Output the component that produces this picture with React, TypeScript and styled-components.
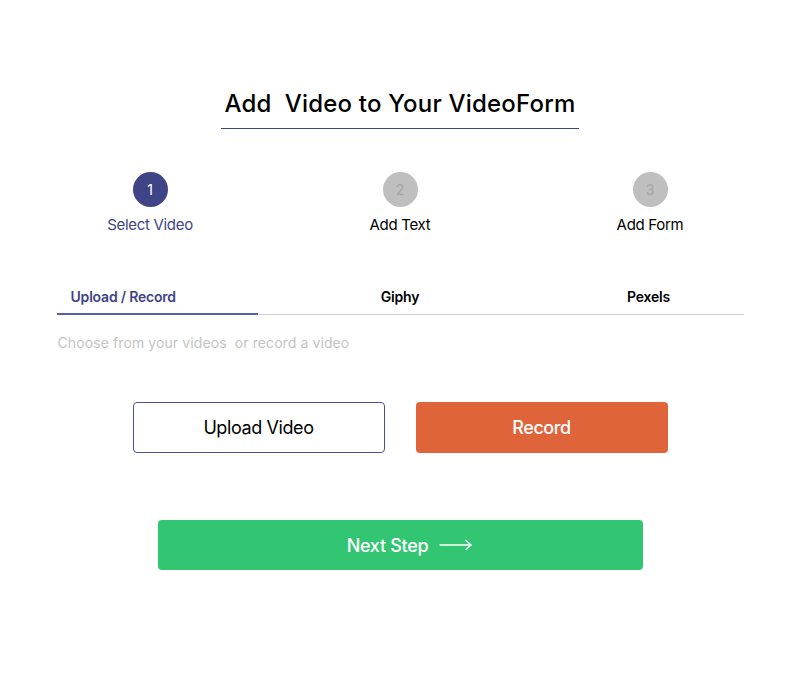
import React, { useState } from 'react';
import styled, { createGlobalStyle } from 'styled-components';

const INDIGO = '#3f4486';
const FONT = `Inter, "Noto Sans", "Liberation Sans", sans-serif`;

const GlobalStyle = createGlobalStyle`
    html, body {
        margin: 0;
        padding: 0;
        background: #ffffff;
        font-family: ${FONT};
    }
`;

const steps = ['Select Video', 'Add Text', 'Add Form'];
const tabs = ['Upload / Record', 'Giphy', 'Pexels'];

export default function App() {

    const [activeTab, setActiveTab] = useState<number>(0);

    return (<Page>
        <GlobalStyle />

        {/* Heading */}
        <TitleRow>
            <Title>Add&nbsp; Video to Your VideoForm</Title>
        </TitleRow>

        {/* Progress */}
        <Steps>
            {steps.map((label, i) => <Step key={label}>
                <StepCircle active={i === 0}>{i + 1}</StepCircle>
                <StepLabel active={i === 0}>{label}</StepLabel>
            </Step>)}
        </Steps>

        {/* Source tabs */}
        <Tabs>
            {tabs.map((label, i) => <Tab key={label} index={i} active={activeTab === i} onClick={() => setActiveTab(i)}>
                {label}
            </Tab>)}
        </Tabs>
        <Hint>Choose from your videos&nbsp; or record a video</Hint>

        <ButtonRow>
            <OutlineButton>Upload Video</OutlineButton>
            <RecordButton>Record</RecordButton>
        </ButtonRow>

        <NextRow>
            <NextButton>
                Next Step
                <svg width="34" height="12" viewBox="0 0 34 12" fill="none" stroke="#ffffff" strokeWidth="1.3" strokeLinecap="round" strokeLinejoin="round">
                    <path d="M1 6h31" />
                    <path d="M27 1.5l5 4.5-5 4.5" />
                </svg>
            </NextButton>
        </NextRow>
    </Page>);
}

const Page = styled.div`
    width: 800px;
    height: 693px;
    display: flex;
    flex-direction: column;
    align-items: center;
    box-sizing: border-box;
    padding-top: 89px;
`;

const TitleRow = styled.div`
    border-bottom: 1px solid ${INDIGO};
    padding: 0 3px 10px;
`;

const Title = styled.h1`
    margin: 0;
    font-size: 24px;
    line-height: 29px;
    font-weight: 500;
    color: #000000;
    letter-spacing: 0.2px;
`;

const Steps = styled.div`
    margin-top: 43px;
    width: 750px;
    display: grid;
    grid-template-columns: repeat(3, 1fr);
`;

const Step = styled.div`
    display: flex;
    flex-direction: column;
    align-items: center;
    gap: 9px;
`;

const StepCircle = styled.div<{ active: boolean }>`
    width: 35px;
    height: 35px;
    border-radius: 50%;
    display: flex;
    align-items: center;
    justify-content: center;
    font-size: 14px;
    background: ${props => props.active ? INDIGO : '#bfbfbf'};
    color: ${props => props.active ? '#ffffff' : '#a6a6a6'};
`;

const StepLabel = styled.div<{ active: boolean }>`
    font-size: 15px;
    line-height: 18px;
    letter-spacing: -0.3px;
    color: ${props => props.active ? INDIGO : '#000000'};
`;

const Tabs = styled.div`
    margin-top: 48px;
    width: 687px;
    display: grid;
    grid-template-columns: 201px 1fr 201px;
    border-bottom: 1px solid #d0d0d0;
`;

const Tab = styled.div<{ active: boolean, index: number }>`
    font-size: 14px;
    line-height: 17px;
    font-weight: 600;
    letter-spacing: -0.2px;
    padding: 6px 0 8px;
    margin-bottom: -1px;
    cursor: pointer;
    text-align: ${props => props.index === 0 ? 'left' : 'center'};
    padding-left: ${props => props.index === 0 ? '14px' : props.index === 2 ? '11px' : '0'};
    color: ${props => props.active ? INDIGO : '#000000'};
    border-bottom: 2px solid ${props => props.active ? '#5a5fa8' : 'transparent'};
`;

const Hint = styled.div`
    width: 687px;
    padding-left: 1px;
    box-sizing: border-box;
    margin-top: 19px;
    font-size: 14px;
    line-height: 17px;
    letter-spacing: 0.1px;
    color: #c4c4c4;
`;

const ButtonRow = styled.div`
    margin-top: 51px;
    display: flex;
    gap: 31px;
`;

const OutlineButton = styled.button`
    width: 252px;
    height: 51px;
    border: 1px solid #4a4f96;
    border-radius: 4px;
    background: #ffffff;
    font-family: ${FONT};
    font-size: 18px;
    letter-spacing: -0.4px;
    color: #000000;
    cursor: pointer;
`;

const RecordButton = styled(OutlineButton)`
    border: none;
    background: #e0643a;
    color: #ffffff;
    font-weight: 500;
`;

const NextRow = styled.div`
    margin-top: 67px;
`;

const NextButton = styled.button`
    width: 485px;
    height: 50px;
    border: none;
    border-radius: 4px;
    background: #32c673;
    color: #ffffff;
    font-family: ${FONT};
    font-size: 18px;
    font-weight: 500;
    letter-spacing: -0.3px;
    display: flex;
    align-items: center;
    justify-content: center;
    gap: 11px;
    padding: 0 0 0 20px;
    cursor: pointer;
`;
